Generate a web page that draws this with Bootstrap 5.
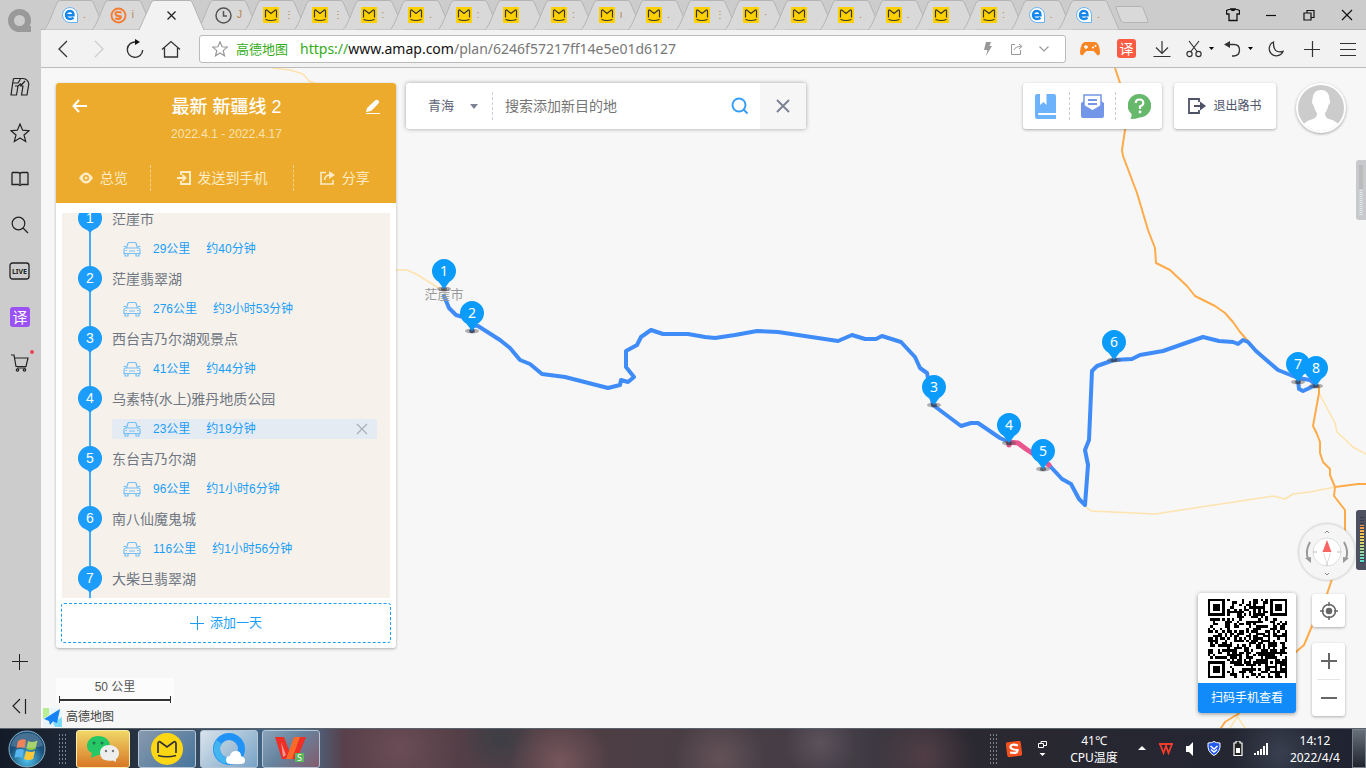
<!DOCTYPE html>
<html lang="zh-CN">
<head>
<meta charset="utf-8">
<meta name="viewport" content="width=device-width, initial-scale=1">
<title>高德地图</title>
<link href="https://cdn.jsdelivr.net/npm/bootstrap@5.3.0/dist/css/bootstrap.min.css" rel="stylesheet">
<style>
  body { font-family: "Liberation Sans", "Noto Sans CJK SC", sans-serif; font-size: 14px; line-height: 20px; background: #f7f7f7; }
  svg { display: block; flex: none; }
  button { color: inherit; }
  .plain { border: 0; background: none; padding: 0; display: flex; align-items: center; justify-content: center; }
  .ln { fill: none; stroke: currentColor; }
  .ui-font { font-family: "Noto Sans", "Noto Sans CJK SC", sans-serif; }

  /* browser chrome */
  .side { width: 41px; background: #ccc; color: #222; }
  .side .plain { height: 46px; padding-right: 1px; }
  .side .foot { height: 44px; }
  .side .logo { height: 42px; margin-bottom: 22px; color: #999; }
  .live { font: bold 8px "Noto Sans", sans-serif; }
  .dot { width: 4px; height: 4px; top: 10px; right: 7px; background: #f5414f; border-radius: 50%; }
  .tabs { height: 30px; background: #ccc; border-bottom: 1px solid #b4b4b4; }
  .tab-strip { flex: 0 1 1062px; margin-left: 3px; isolation: isolate; }
  .tab-item { flex: 1 1 0; height: 30px; position: relative; justify-content: flex-start; padding-left: 18px; color: #b8844a; font-size: 10px; }
  .tab-item .shape { position: absolute; left: 0; top: 0; z-index: -1; }
  .tab-item .title { margin-left: 5px; }
  .tab-item.on { z-index: 1; color: #222; padding-left: 28px; }
  .win .plain { width: 38px; color: #111; }
  .tools { height: 38px; background: #f2f2f2; border-bottom: 1px solid #bbb; padding-left: 4px; color: #333; }
  .tools .plain { width: 36px; }
  .tools .wide { width: 39px; gap: 7px; }
  .url { height: 28px; margin: 0 6px 0 10px; border: 1px solid #bbb; border-radius: 3px; background: #fff; padding: 0 7px 0 12px; color: #999; }
  .url .plain { width: 28px; }
  .url .site, .url .scheme { color: #35ac19; }
  .url .site { font-size: 13px; margin: 0 12px 0 8px; }
  .url .addr { font-size: 14px; color: #777; }
  .url .host { color: #111; }

  /* map */
  .map { background: #f7f7f7; min-height: 0; }
  .pin-no { font: 14px "Noto Sans", sans-serif; fill: #fff; text-anchor: middle; }
  .over { position: absolute; }
  .box { background: #fff; border-radius: 3px; box-shadow: 0 1px 3px rgba(0,0,0,.3); }
  .plan { left: 15px; top: 15px; bottom: 80px; width: 340px; overflow: hidden; }
  .plan-head { background: #ecab2c; color: #fff; height: 120px; }
  .plan-head .title { font-size: 18px; font-weight: 500; line-height: 24px; }
  .plan-head .date { font-size: 12px; color: #fbe3b0; margin-top: 6px; line-height: 18px; }
  .plan-head .acts { color: #fdecc6; height: 26px; margin-top: 22px; }
  .acts .plain { gap: 7px; font-size: 14px; }
  .acts .plain + .plain { border-left: 1px dashed #f6d38c; }
  .days { background: #f6f1eb; margin: 10px 6px 5px; overflow: hidden; min-height: 0; }
  .days ol { margin-top: -9px; }
  .stop { position: relative; padding-left: 50px; height: 60px; color: #6f7782; }
  .stop::before { content: ""; position: absolute; left: 27px; top: 15px; height: 60px; width: 2px; background: #44adf9; }
  .stop .mark-pin { left: 16px; top: 2px; }
  .stop .name { height: 30px; line-height: 30px; }
  .leg { height: 20px; margin: 5px 13px 5px 0; padding-left: 11px; border-radius: 2px; font-size: 12px; color: #1a9ef8; }
  .leg.on { background: #e4ebf2; }
  .add-day { height: 40px; margin: 0 5px 5px; border: 1px dashed #1a9ef8; border-radius: 3px; color: #1a9ef8; font-size: 13px; gap: 6px; }
  .find { left: 365px; top: 15px; width: 400px; height: 46px; color: #5d6378; box-shadow: 0 0 4px rgba(0,0,0,.35); overflow: hidden; }
  .find .area { appearance: none; border: 0; background: transparent; font-size: 13px; color: inherit; width: 64px; padding: 0 0 0 22px; outline: 0; }
  .find .sep { height: 28px; margin-left: 14px; border-left: 1px dashed #ccd0da; }
  .find input { border: 0; outline: 0; font-size: 14px; padding: 0 0 0 12px; min-width: 0; }
  .find input::placeholder { color: #757575; }
  .find .plain { width: 40px; }
  .find .shut { width: 46px; background: #f6f6f6; color: #7b7f92; }
  .top-right { right: 20px; top: 15px; gap: 12px; }
  .top-right .box { height: 46px; }
  .trio { width: 139px; }
  .trio .plain { flex: 1; height: 28px; }
  .trio .plain + .plain { border-left: 1px dashed #ccc; }
  .leave { width: 102px; font-size: 12px; color: #4d5267; gap: 7px; }
  .face { width: 50px; height: 50px; margin-left: 8px; border-radius: 50%; border: 2px solid #fff; background: #ccc; overflow: hidden; box-shadow: 0 1px 3px rgba(0,0,0,.35); }
  .bottom-right { right: 21px; bottom: 12px; gap: 16px; }
  .bottom-right .stack { width: 33px; gap: 16px; color: #666; }
  .bottom-right .locate { height: 33px; }
  .zooms .plain { height: 36px; width: 33px; }
  .zooms hr { margin: 0 5px; border-color: #999; }
  .qr { width: 98px; overflow: hidden; margin-bottom: 3px; box-shadow: 0 1px 4px rgba(0,0,0,.4); }
  .qr .code { padding: 6px 0 5px; }
  .qr .cap { background: #118bfa; color: #fff; font-size: 12px; line-height: 30px; text-align: center; }
  .compass { right: 10px; bottom: 147px; filter: drop-shadow(0 0 1px rgba(0,0,0,.25)); }
  .meter { right: 0; }
  .scale { left: 15px; bottom: 25px; width: 118px; background: #fcfcfc; font-size: 12px; line-height: 18px; color: #555; padding: 0 3px; }
  .scale .bar { height: 7px; border: solid #333; border-width: 0 1px; background: linear-gradient(#333,#333) center/100% 2px no-repeat; }
  .brand { left: 2px; bottom: 1px; font-size: 12px; color: #444; gap: 4px; }

  /* taskbar */
  .task { height: 40px; border-top: 1px solid #59616b; color: #fff; font-size: 12px; line-height: 17px;
    background:
      radial-gradient(circle at 400px 20px, #75535daa 0, transparent 60px),
      radial-gradient(circle at 560px 34px, #8b6268aa 0, transparent 50px),
      radial-gradient(circle at 500px 8px, #3d3e45 0, transparent 40px),
      radial-gradient(circle at 720px 30px, #76606599 0, transparent 46px),
      radial-gradient(circle at 820px 14px, #6b606a99 0, transparent 36px),
      radial-gradient(circle at 925px 26px, #65474f99 0, transparent 50px),
      radial-gradient(circle at 1280px 24px, #434c5caa 0, transparent 50px),
      linear-gradient(90deg, #131b28 0, #26303f 130px, #4b7295 300px, #583f49 345px, #4d3e44 600px, #433d46 850px, #2b2931 960px, #202432 1366px); }
  .orb { width: 54px; }
  .grip { width: 9px; height: 32px; background: radial-gradient(circle, #788290 1px, transparent 1px) 0 0/3px 4px; }
  .app { height: 38px; width: 58px; border: 1px solid #b7c6d5; border-radius: 3px; margin-left: 4px; background: linear-gradient(135deg, #8799ad, #47759b); }
  .app.chat { width: 54px; margin: 0 4px 0 9px; background: linear-gradient(#f0d766, #d87727); border-color: #f9edab; }
  .app.lit { background: linear-gradient(135deg, #d9e3eb, #77a3c6); }
  .app.office { background: linear-gradient(135deg, #8ba3ba, #67849f 45%, #835a6b); }
  .tray .plain { width: 24px; }
  .tray .clock { margin: 0 12px 0 16px; }
  .tray .peek { width: 14px; height: 39px; border: 1px solid #77808b; background: linear-gradient(#67707a, #20242d); }
</style>
</head>
<body class="vh-100 d-flex flex-column overflow-hidden">

<svg width="0" height="0" class="position-absolute" aria-hidden="true">
  <symbol id="tab" viewBox="0 0 62 30"><path d="M0 29.5C4 28 12 3 14 1.500Q15 .5 17 .5H46Q48 .5 49 2L61 29.500" fill="#d9d9d9" stroke="#b4b4b4"/></symbol>
  <symbol id="tab-on" viewBox="0 0 66 30"><path d="M0 30L12 3Q13 .5 15 .5H50Q52 .5 53 2L65 30" fill="#f2f2f2" stroke="#b4b4b4"/><path d="M1 29.500H64" stroke="#f2f2f2" stroke-width="2"/></symbol>
  <symbol id="mt" viewBox="0 0 16 16"><path fill="#ffd100" d="M0 0h16v16H0z"/><path d="M2.500 10.500V4Q2.700 2.300 4 3.300L8 6.500L12 3.300Q13.300 2.300 13.500 4V10.500M2.500 12.500Q8 14.500 13.500 12.500" fill="none" stroke="#333" stroke-width="1.200"/></symbol>
  <symbol id="ee" viewBox="0 0 16 16"><path d="M8 .5A7.500 7.500 0 1 0 8 15.500H15.500V8A7.500 7.500 0 0 0 8 .5Z" fill="#fff" stroke="#6bb3f0"/><path d="M4 8.300H11.500Q11.500 4 8 4Q4 4 4 8T8 12Q10 12 11.500 10.800" fill="none" stroke="#1686ea" stroke-width="2.400"/></symbol>
  <symbol id="car" viewBox="0 0 18 16"><g fill="none" stroke="#74c0f6" stroke-width="1.200" stroke-linejoin="round"><path d="M3.500 7L4.800 2.500Q5.200 1.500 6.200 1.500H11.800Q12.800 1.500 13.200 2.500L14.500 7M2.500 7H15.500Q17 7.500 17 9V12.500H1V9Q1 7.500 2.500 7ZM2 12.500V15H5V12.500M13 12.500V15H16V12.500M.5 5.500H3M15 5.500H17.500M6 10H12M2.500 9.500H4M14 9.500H15.500"/></g></symbol>
  <symbol id="drop" viewBox="0 0 24 28"><path d="M12 27Q10 24 7 23A12 12 0 1 1 17 23Q14 24 12 27Z" fill="#1c9dfb"/></symbol>
  <symbol id="pin" viewBox="-14 -13 28 36" overflow="visible"><ellipse cy="18" rx="7" ry="2.500" fill="#555" opacity=".45"/><ellipse cy="18" rx="3" ry="2" fill="#334" opacity=".6"/><path d="M0 18L-5.500 10.700A12 12 0 1 1 5.500 10.700Z" fill="#0a9bfb"/></symbol>
</svg>

<div class="d-flex flex-fill" style="min-height:0">
  <!-- browser side rail -->
  <nav class="side d-flex flex-column flex-shrink-0" aria-label="侧边栏">
    <button class="plain logo" aria-label="菜单"><svg width="24" height="24" viewBox="0 0 24 24"><circle cx="11.500" cy="11.500" r="8.500" fill="none" stroke="currentColor" stroke-width="6"/><path d="M13 17H23V23H13Z" fill="currentColor"/></svg></button>
    <button class="plain" aria-label="应用"><svg width="20" height="20" viewBox="0 0 20 20" class="ln" stroke-width="1.200" stroke-linejoin="round"><path d="M3.500 1.500H13Q18 2 18.800 7L17 18H11.500L13 9H10.500L15 4M3.500 1.500L2.500 7.500L1 18H6.500L8 9H5M2.800 6H8L10.500 2M8 9L11 6.500"/></svg></button>
    <button class="plain" aria-label="收藏"><svg width="20" height="20" viewBox="0 0 20 20" class="ln" stroke-width="1.200"><path d="M10 1L12.600 7.200L19 7.700L14 12L15.700 18.500L10 15L4.300 18.500L6 12L1 7.700L7.400 7.200Z"/></svg></button>
    <button class="plain" aria-label="阅读"><svg width="18" height="16" viewBox="0 0 18 16" class="ln" stroke-width="1.300"><path d="M1 1.500H7Q9 1.500 9 3.500V13M17 1.500H11Q9 1.500 9 3.500M1 1.500V13.500H7.500L9 14.500L10.500 13.500H17V1.500"/></svg></button>
    <button class="plain" aria-label="搜索"><svg width="18" height="18" viewBox="0 0 18 18" class="ln" stroke-width="1.200"><circle cx="7.500" cy="7.500" r="6.300"/><path d="M12 12L17 17"/></svg></button>
    <button class="plain live"><svg width="22" height="18" viewBox="0 0 22 18" class="ln"><rect x="1" y="1" width="19" height="16" rx="2.500" stroke-width="1.300"/><text x="10.500" y="12" font-size="7" fill="#222" stroke="none" text-anchor="middle">LIVE</text></svg></button>
    <button class="plain"><svg width="20" height="20" viewBox="0 0 20 20"><rect width="20" height="20" rx="3" fill="#9b51f5"/><text x="10" y="15.500" font-size="15" font-family="Noto Sans CJK SC" fill="#fff" text-anchor="middle">译</text></svg></button>
    <button class="plain position-relative" aria-label="购物"><svg width="20" height="20" viewBox="0 0 20 20" class="ln" stroke-width="1.200"><path d="M1 2H4L6 13.500H16L18 5H5M7 15H16"/><circle cx="7.500" cy="17" r="1.200"/><circle cx="14.500" cy="17" r="1.200"/></svg><span class="dot position-absolute"></span></button>
    <button class="plain foot mt-auto" aria-label="添加"><svg width="16" height="16" viewBox="0 0 16 16" class="ln"><path d="M0 7.500H16M7.500 0V16"/></svg></button>
    <button class="plain foot" aria-label="收起"><svg width="16" height="16" viewBox="0 0 16 16" class="ln" stroke-width="1.200"><path d="M8 1L1 8L8 15M13.500 1V16"/></svg></button>
  </nav>

  <div class="d-flex flex-column flex-fill" style="min-width:0">
    <div class="tabs d-flex flex-shrink-0">
      <div class="tab-strip d-flex" id="tabStrip" aria-label="标签页"></div>
      <button class="plain" aria-label="新标签页"><svg width="48" height="30" viewBox="-9 0 48 30"><path d="M1 8Q0 6.500 2 6.500H25Q27 6.500 28 8L33 21Q33.500 22.500 32 22.500H9Q7 22.500 6 21Z" fill="#d9d9d9" stroke="#b4b4b4"/></svg></button>
      <div class="win d-flex ms-auto">
        <button class="plain" aria-label="皮肤"><svg width="14" height="14" viewBox="0 0 14 14" class="ln" stroke-width="1.300"><path d="M4.500 1Q7 4 9.500 1L13.500 2.500V6H11V12.500H3V6H.5V2.500ZM4 1H10"/></svg></button>
        <button class="plain" aria-label="最小化"><svg width="12" height="12" viewBox="0 0 12 12" class="ln"><path d="M1 6.500H11" stroke-width="1.200"/></svg></button>
        <button class="plain" aria-label="还原"><svg width="12" height="12" viewBox="0 0 12 12" class="ln" stroke-width="1.200"><path d="M1 4H8V11H1ZM4 4V1.500H11V8.500H8"/></svg></button>
        <button class="plain" aria-label="关闭"><svg width="12" height="12" viewBox="0 0 12 12" class="ln" stroke-width="1.200"><path d="M1 1L11 11M11 1L1 11"/></svg></button>
      </div>
    </div>

    <div class="tools ui-font d-flex align-items-center flex-shrink-0">
      <button class="plain" aria-label="后退"><svg width="12" height="18" viewBox="0 0 12 18" class="ln" stroke-width="1.300"><path d="M10 1L2 9L10 17"/></svg></button>
      <button class="plain" aria-label="前进"><svg width="12" height="18" viewBox="0 0 12 18" fill="none" stroke="#ccc" stroke-width="1.300"><path d="M2 1L10 9L2 17"/></svg></button>
      <button class="plain" aria-label="刷新"><svg width="18" height="20" viewBox="0 0 18 20" class="ln" stroke-width="1.400"><path d="M10 3A7.700 7.700 0 1 0 16.700 11"/><path d="M9 0L14 3L9 6Z" fill="#111" stroke="none"/></svg></button>
      <button class="plain" aria-label="主页"><svg width="20" height="18" viewBox="0 0 20 18" class="ln" stroke-width="1.300"><path d="M1 9.500L10 1.500L19 9.500M3.500 8V17H16.500V8"/></svg></button>
      <div class="url d-flex align-items-center flex-fill">
        <svg width="16" height="16" viewBox="0 0 20 20" class="ln" stroke-width="1.500"><path d="M10 1L12.600 7.200L19 7.700L14 12L15.700 18.500L10 15L4.300 18.500L6 12L1 7.700L7.400 7.200Z"/></svg>
        <span class="site">高德地图</span>
        <span class="addr flex-fill text-nowrap overflow-hidden"><span class="scheme">https://</span><span class="host">www.amap.com</span>/plan/6246f57217ff14e5e01d6127</span>
        <button class="plain" aria-label="极速"><svg width="8" height="14" viewBox="0 0 8 14"><path d="M2 0H7L5.500 4H8L2 14L3.500 8H0Z" fill="#999"/></svg></button>
        <button class="plain" aria-label="分享"><svg width="13" height="12" viewBox="0 0 13 12" class="ln"><path d="M5 1.500H1.500V11.500H10.500V7M4 7Q5 3.500 11 3.500M9 1L12 3.500L9 6"/></svg></button>
        <button class="plain" aria-label="展开"><svg width="10" height="6" viewBox="0 0 10 6" class="ln" stroke-width="1.200"><path d="M.5 .5L5 5L9.500 .5"/></svg></button>
      </div>
      <button class="plain" aria-label="游戏"><svg width="20" height="14" viewBox="0 0 20 14"><path d="M5 0H15Q19 0 20 10Q20 14 17 13Q15 10 13.500 9H6.500Q5 10 3 13Q0 14 0 10Q1 0 5 0Z" fill="#f98625"/><path d="M6 3V7M4 5H8" stroke="#fff" stroke-width="1.500"/><circle cx="13" cy="5.500" r="1" fill="#fff"/><circle cx="15.500" cy="4" r="1" fill="#fff"/></svg></button>
      <button class="plain"><svg width="19" height="19" viewBox="0 0 19 19"><rect width="19" height="19" rx="3" fill="#fb5b43"/><text x="9.500" y="14.500" font-size="14" font-family="Noto Sans CJK SC" fill="#fff" text-anchor="middle">译</text></svg></button>
      <button class="plain" aria-label="下载"><svg width="18" height="18" viewBox="0 0 18 18" class="ln" stroke-width="1.200"><path d="M9 1V13M3 7.500L9 13.500L15 7.500M.5 16.500H17.500"/></svg></button>
      <button class="plain wide" aria-label="截图"><svg width="16" height="18" viewBox="0 0 16 18" class="ln" stroke-width="1.200"><path d="M3 1L11.500 12M13 1L4.500 12"/><circle cx="3.500" cy="14" r="2.600"/><circle cx="12.500" cy="14" r="2.600"/></svg><svg width="5" height="3"><path d="M0 0H5L2.500 3Z"/></svg></button>
      <button class="plain wide" aria-label="撤销"><svg width="17" height="16" viewBox="0 0 17 16" class="ln" stroke-width="1.300"><path d="M3 3.500H10Q15.500 3.500 15.500 9T10 15H8"/><path d="M0 3.500L6 0V7Z" fill="currentColor" stroke="none"/></svg><svg width="5" height="3"><path d="M0 0H5L2.500 3Z"/></svg></button>
      <button class="plain" aria-label="夜间模式"><svg width="16" height="16" viewBox="0 0 16 16" class="ln" stroke-width="1.300"><path d="M5.500 1A7.200 7.200 0 1 0 15 10.500Q5 13 5.500 1Z"/></svg></button>
      <button class="plain" aria-label="新建"><svg width="16" height="16" viewBox="0 0 16 16" class="ln"><path d="M0 8.500H16M8.500 0V16" stroke-width="1.200"/></svg></button>
      <button class="plain" aria-label="菜单"><svg width="16" height="14" viewBox="0 0 16 14" class="ln"><path d="M0 1.500H16M0 7.500H16M0 13.500H16"/></svg></button>
    </div>

    <main class="map position-relative flex-fill overflow-hidden">
      <svg class="w-100 h-100" viewBox="41 68 1325 660" preserveAspectRatio="xMinYMin slice" role="img" aria-label="路线地图">
        <g fill="none" stroke-linejoin="round" stroke-linecap="round">
          <g stroke="#fde3ae" stroke-width="1.500">
            <path d="M272 68L290 70L303 74L309 81L316 84M396 270H407L416 274L437 287L444 291M1086 507L1091 511L1155 514L1273 496L1285 499L1293 494L1310 492L1335 487M1319 393L1335 423L1337 432L1353 447L1366 454M1239 714L1230 728M1237 716L1245 728"/>
          </g>
          <path stroke="#feab4a" stroke-width="2" d="M1115 68L1120 83L1125 130L1122 150L1123 156L1137 193L1148 230L1155 248L1156 263L1170 270L1187 286L1195 296L1215 306L1225 313L1233 322L1240 332L1248 341M1319 386V393L1313 426L1317 434L1320 442V453L1323 462L1330 469V475L1335 487L1334 496L1345 510V535L1331 582L1327 594L1312 626L1304 645L1297 651L1238 714L1225 722L1221 728M1335 487L1358 484H1366"/>
          <path stroke="#3f8cf8" stroke-width="4" d="M444 296L449 308L456 315L463 317L472 325V331M472 325L478 326L500 340L510 348L520 360L530 364L542 374L565 377L608 388L620 385L621 380L628 382L634 377L626 367V351L637 345L641 337L651 330L663 334H688L705 337L715 338L735 335L757 331L778 332L838 341L852 335L865 339H876L882 336L901 342L915 357L920 368L927 373L930 388L933 405L961 426L971 423H978L1000 438L1009 442M1049 465L1062 479L1071 484L1079 499L1085 505L1088 465L1085 450L1089 440L1092 371L1097 366L1114 360L1132 359L1140 355L1163 351L1203 337L1219 341L1233 342L1238 344L1243 340L1248 342L1256 351L1278 370L1298 378L1310 380L1316 385M1298 380L1299 389L1303 391L1316 385"/>
          <path stroke="#e9558c" stroke-width="5" d="M1009 445V442L1018 443L1026 449L1032 453L1043 460L1049 465"/>
        </g>
        <text x="444" y="299" font-size="13" fill="#999" text-anchor="middle" style="font-family:'Noto Sans CJK SC'">茫崖市</text>
        <g id="pins"></g>
      </svg>

      <!-- trip plan -->
      <section class="plan box over d-flex flex-column">
        <header class="plan-head flex-shrink-0">
          <div class="d-flex justify-content-between align-items-start pt-2 px-3">
            <button class="plain pt-2" aria-label="返回"><svg width="15" height="14" viewBox="0 0 15 14" class="ln" stroke-width="2"><path d="M7 1L1.500 7L7 13M2 7H15"/></svg></button>
            <div class="text-center pt-1"><div class="title">最新 新疆线 2</div><div class="date">2022.4.1 - 2022.4.17</div></div>
            <button class="plain pt-2" aria-label="编辑"><svg width="14" height="15" viewBox="0 0 14 15"><path d="M1 9L9 1.500Q11 0 12.500 1.500T12.500 4.500L5 12L0 13ZM0 14H14V15H0Z" fill="#fff"/></svg></button>
          </div>
          <div class="acts d-flex">
            <button class="plain" style="flex:95"><svg width="14" height="12" viewBox="0 0 14 12"><path d="M0 6Q7-5 14 6Q7 17 0 6Z" fill="currentColor"/><circle cx="7" cy="6" r="3" fill="#ecab2c"/><circle cx="7" cy="6" r="1.500" fill="#fdecc6"/></svg>总览</button>
            <button class="plain" style="flex:142"><svg width="14" height="14" viewBox="0 0 14 14" class="ln" stroke-width="2"><path d="M4 4V1H13V13H4V10M0 7H8M5.500 4L8.500 7L5.500 10"/></svg>发送到手机</button>
            <button class="plain" style="flex:103"><svg width="15" height="14" viewBox="0 0 15 14" class="ln" stroke-width="1.600"><path d="M6 1.500H1V13H13V9M4.500 9Q5 4 10 4"/><path d="M9 0L15 4L9 8Z" fill="currentColor" stroke="none"/></svg>分享</button>
          </div>
        </header>
        <div class="days flex-fill"><ol class="list-unstyled mb-0" id="stops"></ol></div>
        <button class="plain add-day flex-shrink-0"><svg width="14" height="14" viewBox="0 0 14 14" class="ln"><path d="M0 7.500H14M7.500 0V14"/></svg>添加一天</button>
      </section>

      <!-- destination search -->
      <form class="find box over d-flex align-items-center">
        <select class="area" aria-label="地区"><option>青海</option></select>
        <svg width="8" height="5"><path d="M0 0H8L4 5Z" fill="#7d8296"/></svg>
        <span class="sep"></span>
        <input class="flex-fill" type="text" placeholder="搜索添加新目的地" aria-label="搜索添加新目的地">
        <button type="button" class="plain" aria-label="搜索"><svg width="18" height="18" viewBox="0 0 18 18" fill="none" stroke="#359ffa" stroke-width="2"><circle cx="8" cy="8" r="6.500"/><path d="M12.500 12.500L16.500 16.500"/></svg></button>
        <button type="button" class="plain shut h-100" aria-label="关闭"><svg width="14" height="14" viewBox="0 0 14 14" class="ln" stroke-width="1.800"><path d="M1 1L13 13M13 1L1 13"/></svg></button>
      </form>

      <div class="top-right over d-flex">
        <div class="trio box d-flex align-items-center">
          <button class="plain" aria-label="路书"><svg width="21" height="25" viewBox="0 0 21 25"><path d="M0 2Q0 0 2 0H5V11L8.500 8L11.500 11V0H19Q21 0 21 2V19H4Q3 19 3 20T4 21H21V25H2Q0 25 0 22Z" fill="#6cb3fb"/></svg></button>
          <button class="plain" aria-label="消息"><svg width="23" height="24" viewBox="0 0 23 24"><path d="M3 1H20V12L11.500 17L3 12Z" fill="#fff" stroke="#7396e8" stroke-width="1.500"/><path d="M7 6H16M7 10H16" stroke="#7396e8" stroke-width="1.800"/><path d="M0 9L3 7V12L11.500 17L20 12V7L23 9V22Q23 24 21 24H2Q0 24 0 22Z" fill="#7396e8"/></svg></button>
          <button class="plain" aria-label="帮助"><svg width="23" height="25" viewBox="0 0 23 25"><path d="M11.500 0A11.500 11.500 0 1 1 11.500 23.500Q8 25 2.500 25Q4 22 3.500 20A11.500 11.500 0 0 1 11.500 0Z" fill="#66b96b"/><path d="M7.700 9Q7.700 5.500 11.500 5.500T15.300 9Q15.300 11 12 12.500V15" fill="none" stroke="#fff" stroke-width="2.200"/><circle cx="12" cy="18" r="1.400" fill="#fff"/></svg></button>
        </div>
        <button class="plain box leave"><svg width="18" height="16" viewBox="0 0 18 16" class="ln" stroke-width="1.800"><path d="M11 4V1H1V15H11V12M6 8H13"/><path d="M12 3.500L18 8L12 12.500Z" fill="currentColor" stroke="none"/></svg>退出路书</button>
        <button class="plain face" aria-label="头像"><svg width="46" height="46" viewBox="0 0 46 46"><path d="M23 5Q31 5 31.500 14Q33 18 30.500 20Q29 26 27 28Q27 33 31 34Q41 36 44 46H2Q5 36 15 34Q19 33 19 28Q17 26 15.500 20Q13 18 14.500 14Q15 5 23 5Z" fill="#fff"/></svg></button>
      </div>

      <div class="compass over"><svg width="58" height="58" viewBox="0 0 58 58"><circle cx="29" cy="29" r="28" fill="#f5f5f5" stroke="#e6e6e6"/><circle cx="29" cy="29" r="14" fill="#fff" stroke="#ddd"/><path d="M15 29H19M39 29H43M29 40V43" stroke="#bbb"/><path d="M29 17L33.500 29H24.500Z" fill="#f96565"/><path d="M25.500 30L29 41L32.500 30" fill="#fff" stroke="#ddd"/><g fill="none" stroke="#999" stroke-width="2"><path d="M12 19Q7 28 10 36M46 19Q51 28 48 36"/></g><path d="M7 35L13 40V34ZM51 35L45 40V34Z" fill="#999"/><path d="M27 10L29 8L31 10M27 50L29 52L31 50" fill="none" stroke="#888"/></svg></div>

      <div class="bottom-right over d-flex align-items-end">
        <div class="qr box"><div class="code d-flex justify-content-center"><svg id="qr" width="79" height="79" viewBox="0 0 33 33" shape-rendering="crispEdges" role="img" aria-label="二维码"></svg></div><div class="cap">扫码手机查看</div></div>
        <div class="stack d-flex flex-column">
          <button class="plain box locate" aria-label="定位"><svg width="18" height="18" viewBox="0 0 18 18" class="ln" stroke-width="1.500"><circle cx="9" cy="9" r="6.500"/><circle cx="9" cy="9" r="2.500" fill="currentColor"/><path d="M9 0V4M9 14V18M0 9H4M14 9H18"/></svg></button>
          <div class="box zooms">
            <button class="plain" aria-label="放大"><svg width="16" height="16" viewBox="0 0 16 16" class="ln" stroke-width="2"><path d="M0 8H16M8 0V16"/></svg></button>
            <hr>
            <button class="plain" aria-label="缩小"><svg width="16" height="16" viewBox="0 0 16 16" class="ln" stroke-width="2"><path d="M0 8H16"/></svg></button>
          </div>
        </div>
      </div>

      <div class="meter over" style="top:14%"><svg width="10" height="60" viewBox="0 0 10 60"><rect width="14" height="60" rx="3" fill="#c8c9cc"/><path d="M5 5V29" stroke="#bbb" stroke-width="4"/><path d="M5 30V55" stroke="#dcecec" stroke-width="3" stroke-dasharray="1 1"/></svg></div>
      <div class="meter over" style="top:67%"><svg width="10" height="60" viewBox="0 0 10 60"><defs><linearGradient id="lv" x2="0" y2="1"><stop stop-color="#f5934a"/><stop offset=".35" stop-color="#f2d254"/><stop offset="1" stop-color="#56dfd0"/></linearGradient></defs><rect width="14" height="60" rx="3" fill="#4d505e"/><rect x="4" y="15" width="4" height="37" fill="url(#lv)"/><path d="M6 7V53" stroke="#3a3c48" stroke-width="4" stroke-dasharray="1 2"/></svg></div>

      <div class="scale over text-center">50 公里<div class="bar"></div></div>
      <div class="brand over d-flex align-items-center"><svg width="19" height="19" viewBox="0 0 19 19"><rect width="19" height="19" rx="3" fill="#e9f4f8"/><path d="M0 0H6V7L0 11Z" fill="#b9ef94"/><path d="M10 15L19 9V19H12Z" fill="#7adcf8"/><path d="M17 1L1 11L6 13L7 17L10 13.500L14 15Z" fill="#1583f5"/></svg>高德地图</div>
    </main>
  </div>
</div>

<!-- desktop taskbar -->
<footer class="task ui-font d-flex align-items-center flex-shrink-0">
  <button class="plain orb" aria-label="开始"><svg width="38" height="38" viewBox="0 0 38 38"><defs><radialGradient id="orb" cy=".8"><stop stop-color="#4fc5ee"/><stop offset="1" stop-color="#194e78"/></radialGradient></defs><circle cx="19" cy="19" r="18" fill="url(#orb)" stroke="#8fb1c7"/><path d="M10 11Q14 8 18 10L16.500 18Q12 16.500 8.500 18.500Z" fill="#ee6632"/><path d="M20 11Q25 13 29.500 10.500L27.500 19Q23 21 18.500 19Z" fill="#93c848"/><path d="M8 20Q12 18 16 20L14 28Q10 26 6.500 28Z" fill="#58b5f0"/><path d="M18 21Q23 23 27 21L25 29Q20 31 16 29Z" fill="#fcc838"/><path d="M3 16Q6 3 19 3T35 16Q19 20 3 16" fill="#fff" opacity=".2"/></svg></button>
  <span class="grip ms-1"></span>
  <button class="plain app chat" aria-label="微信"><svg width="34" height="28" viewBox="0 0 34 28"><path d="M12 1C19 1 24 5 24 11S19 20 12 20L5 23L6 18Q1 16 1 11C1 5 6 1 12 1Z" fill="#26c765"/><path d="M23 10C29 10 33 14 33 18Q33 22 30 24V27L27 25.500Q14 27 14 18C14 13 18 10 23 10Z" fill="#eee"/><g fill="#275"><circle cx="8" cy="8" r="1.500"/><circle cx="16" cy="8" r="1.500"/></g><g fill="#777"><circle cx="20" cy="16" r="1.200"/><circle cx="27" cy="16" r="1.200"/></g></svg></button>
  <button class="plain app" aria-label="美团"><svg width="32" height="32" viewBox="0 0 32 32"><circle cx="16" cy="16" r="16" fill="#fed714"/><path d="M7 20V10.500Q7.500 7.500 10 9.500L16 14L22 9.500Q24.500 7.500 25 10.500V20M7 22.500Q16 25 25 22.500" fill="none" stroke="#333" stroke-width="1.700"/></svg></button>
  <button class="plain app lit" aria-label="浏览器"><svg width="32" height="32" viewBox="0 0 32 32"><circle cx="16" cy="16" r="12.500" fill="none" stroke="#2293f6" stroke-width="7"/><path d="M6 9A12.500 12.500 0 0 0 13 28" fill="none" stroke="#44b6ef" stroke-width="6"/><path d="M17 31Q13 31 13 27T17 23Q18 18 23 18T28 23Q32 24 32 27.500T28 31Z" fill="#fff"/></svg></button>
  <button class="plain app office" aria-label="办公"><svg width="34" height="28" viewBox="0 0 34 28"><path d="M1 2H10L16 18L20 2H32L23 24H17L15 18L12 24H8Z" fill="#ef2e25"/><path d="M12 24L20 2H26L18 24Z" fill="#fb6a29"/><path d="M7 7L12 20L9 22Z" fill="#fff" opacity=".5"/><rect x="21" y="18" width="9" height="9" fill="#58b85b"/><text x="25.500" y="26" font-size="9" fill="#fff" text-anchor="middle">S</text></svg></button>

  <div class="tray d-flex align-items-center ms-auto text-center">
    <span class="grip"></span>
    <button class="plain mx-1" aria-label="输入法"><svg width="16" height="16" viewBox="0 0 16 16"><rect x=".5" y=".5" width="15" height="15" rx="2" fill="#f2501f" transform="rotate(-7 8 8)"/><path d="M12 4.500Q5 2.500 4.500 5.500T11.500 9Q12 13 4 11.500" fill="none" stroke="#fff" stroke-width="2.200"/></svg></button>
    <button class="plain me-2" aria-label="工具"><svg width="9" height="17" viewBox="0 0 9 17" fill="none" stroke="#fff"><path d="M.5 3.500H5.500V7.500H.5ZM3 3V1.500H8.500V5.500H6"/><path d="M1.500 13H7.500L4.500 16Z" fill="#fff" stroke="none"/></svg></button>
    <div class="mx-2">41℃<br>CPU温度</div>
    <button class="plain ms-1" aria-label="显示隐藏图标"><svg width="8" height="5"><path d="M0 4H8L4 0Z" fill="#fff"/></svg></button>
    <button class="plain" aria-label="办公"><svg width="14" height="12" viewBox="0 0 14 12" fill="none" stroke="#f23c2c" stroke-width="1.800"><path d="M0 1H14M1 1L4.500 10L7 3L9.500 10L13 1"/></svg></button>
    <button class="plain" aria-label="音量"><svg width="8" height="14" viewBox="0 0 8 14"><path d="M0 4H3L7 0V14L3 10H0Z" fill="#fff"/></svg></button>
    <button class="plain" aria-label="安全"><svg width="14" height="15" viewBox="0 0 14 15"><path d="M1 2Q5 2 7 .5Q9 2 13 2Q14 11 7 14.500Q0 11 1 2Z" fill="#2157ee" stroke="#fff"/><path d="M3.500 5L7 8L10.500 5M4 8.500L7 11L10 8.500" fill="none" stroke="#fff" stroke-width="1.500"/></svg></button>
    <button class="plain" aria-label="电池"><svg width="10" height="15" viewBox="0 0 10 15"><path d="M3 0H7V2H9V14.500H1V2H3Z" fill="#222" stroke="#fff" stroke-width="1.200"/><path d="M3 7H7V12H3Z" fill="#fff"/></svg></button>
    <button class="plain" aria-label="网络"><svg width="15" height="12" viewBox="0 0 15 12" fill="#fff"><path d="M0 10H2V12H0ZM3 8H5V12H3ZM6 6H8V12H6ZM9 3H11V12H9ZM12 0H14V12H12Z"/></svg></button>
    <div class="clock">14:12<br>2022/4/4</div>
    <button class="plain peek" aria-label="显示桌面"></button>
  </div>
</footer>

<script src="https://cdn.jsdelivr.net/npm/bootstrap@5.3.0/dist/js/bootstrap.bundle.min.js"></script>
<script>
  // browser tabs: [icon, visible sliver of the title]
  const clock = '<svg width="17" height="17" viewBox="0 0 17 17" fill="none" stroke="#555" stroke-width="1.500"><circle cx="8.500" cy="8.500" r="7.500"/><path d="M8.500 4V9H12"/></svg>';
  const sogou = '<svg width="17" height="17" viewBox="0 0 17 17" fill="none" stroke="#f47b32"><circle cx="8.500" cy="8.500" r="7" stroke-width="1.800"/><path d="M11.500 5.500Q6 4 5.500 6.500T11 9.500Q11 13 5 11.500" stroke-width="2"/></svg>';
  const cross = '<svg width="9" height="9" viewBox="0 0 9 9" stroke="#222" stroke-width="1.300"><path d="M.5 .5L8.500 8.500M8.500 .5L.5 8.500"/></svg>';
  const use = id => `<svg width="16" height="16"><use href="#${id}"/></svg>`;
  const tabs = [[use('ee'), '.'], [sogou, 'i'], [cross, ''], [clock, 'J'],
    ...['⋮', '⋮', ':', '.', ':', '', ':', 'ı', '.', '⋮', '·', '', '.', '.', '', ':'].map(t => [use('mt'), t]),
    [use('ee'), '.'], [use('ee'), '.']];
  document.getElementById('tabStrip').innerHTML = tabs.map(([icon, t], i) => i === 2
    ? `<button class="plain tab-item on" aria-label="当前标签页"><svg class="shape" width="66" height="30"><use href="#tab-on"/></svg>${icon}</button>`
    : `<button class="plain tab-item" aria-label="标签页 ${i + 1}"><svg class="shape" width="62" height="30"><use href="#tab"/></svg>${icon}<span class="title">${t}</span></button>`).join('');

  // stops with the drive that follows each of them
  const stops = [['茫崖市', '29公里', '约40分钟'], ['茫崖翡翠湖', '276公里', '约3小时53分钟'], ['西台吉乃尔湖观景点', '41公里', '约44分钟'],
    ['乌素特(水上)雅丹地质公园', '23公里', '约19分钟'], ['东台吉乃尔湖', '96公里', '约1小时6分钟'], ['南八仙魔鬼城', '116公里', '约1小时56分钟'], ['大柴旦翡翠湖']];
  document.getElementById('stops').innerHTML = stops.map(([name, km, time], i) => `<li class="stop">
    <svg class="mark-pin over" width="24" height="28"><use href="#drop"/><text x="12" y="17" fill="#fff" font-size="14" text-anchor="middle">${i + 1}</text></svg>
    <div class="name">${name}</div>
    ${km ? `<div class="leg d-flex align-items-center${i === 3 ? ' on' : ''}"><svg class="me-2" width="18" height="16"><use href="#car"/></svg><span class="ms-1 me-3">${km}</span><span>${time}</span>${i === 3 ? '<button class="plain ms-auto me-2" aria-label="删除"><svg width="14" height="14" viewBox="0 0 14 14" stroke="#a9b0bb" stroke-width="1.300"><path d="M2 2L12 12M12 2L2 12"/></svg></button>' : ''}</div>` : ''}
  </li>`).join('');

  // map pins
  const pins = [[444, 271], [472, 313], [934, 387], [1009, 425], [1043, 451], [1114, 342], [1298, 364], [1316, 368]];
  document.getElementById('pins').innerHTML = pins.map(([x, y], i) =>
    `<g transform="translate(${x} ${y})"><use href="#pin" x="-14" y="-13" width="28" height="36"/><text class="pin-no" y="5">${i + 1}</text></g>`).join('');

  // QR code modules
  let d = '', seed = 77;
  const rnd = () => (seed = (seed * 16807) % 2147483647) / 2147483647;
  const finder = (x, y) => {
    for (const [ox, oy] of [[0, 0], [26, 0], [0, 26]]) {
      const u = x - ox, v = y - oy;
      if (u >= -1 && u <= 7 && v >= -1 && v <= 7) {
        if (u < 0 || v < 0 || u > 6 || v > 6) return 0;
        return u === 0 || v === 0 || u === 6 || v === 6 || (u > 1 && u < 5 && v > 1 && v < 5) ? 1 : 0;
      }
    }
    const a = Math.max(Math.abs(x - 26), Math.abs(y - 26));
    return a <= 2 ? (a === 1 ? 0 : 1) : null;
  };
  for (let y = 0; y < 33; y++) for (let x = 0; x < 33; x++) {
    const f = finder(x, y), r = rnd() < .5 ? 1 : 0;
    if (f ?? r) d += `M${x} ${y}h1v1h-1z`;
  }
  document.getElementById('qr').innerHTML = `<path d="${d}"/>`;
</script>
</body>
</html>
